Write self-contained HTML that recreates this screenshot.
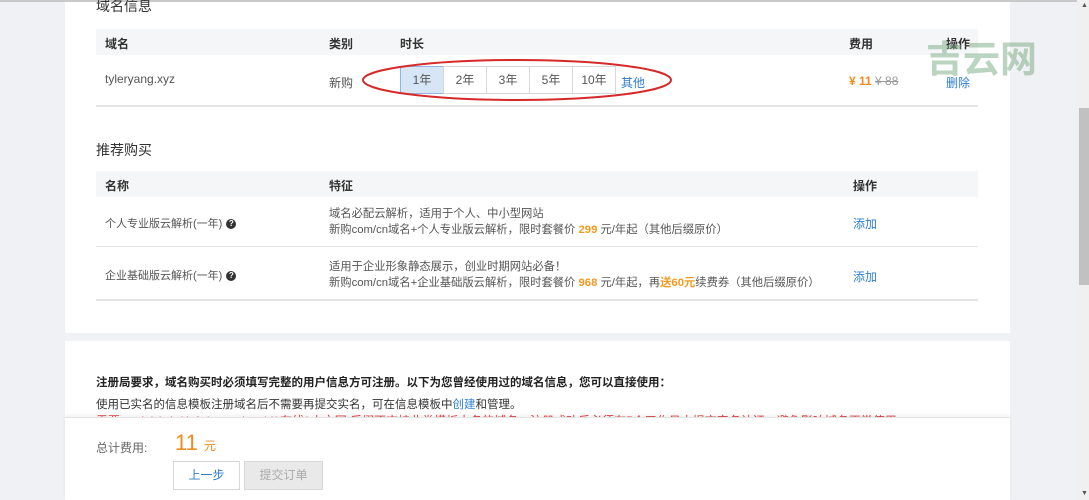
<!DOCTYPE html>
<html><head><meta charset="utf-8"><style>
*{margin:0;padding:0;box-sizing:border-box}
body{width:1089px;height:500px;overflow:hidden;background:#f0f1f4;font-family:"Liberation Sans","Noto Sans CJK SC",sans-serif;font-size:12px;color:#333;position:relative}
.abs{position:absolute}
.panel{position:absolute;left:65px;width:945px;background:#fff}
.th{position:absolute;left:96px;width:882px;height:26px;background:#f5f6f7;font-weight:bold;color:#333}
.line{position:absolute;left:96px;width:882px;height:2px;background:#e3e4e6}
.t{position:absolute;white-space:nowrap}
.blue{color:#2d7ed1}
.org{color:#f39a1e;font-weight:bold}
.yr{position:absolute;top:66px;height:28px;border:1px solid #d8d8d8;background:#fff;text-align:center;line-height:26px;color:#555}
.q{display:inline-block;width:10px;height:10px;border-radius:50%;background:#333;color:#fff;font-size:8px;line-height:10px;text-align:center;vertical-align:middle;margin-left:4px;font-weight:bold}
</style></head><body>
<div class="abs" style="left:0;top:0;width:1089px;height:2px;background:#c9c9c9"></div>
<div class="panel" style="top:2px;height:331px"></div>
<div class="panel" style="top:341px;height:80px"></div>
<div class="t" style="left:96px;top:-4px;font-size:14px;color:#333">域名信息</div>
<div class="th" style="top:29px"></div>
<div class="t" style="left:105px;top:35px;font-weight:bold">域名</div>
<div class="t" style="left:329px;top:35px;font-weight:bold">类别</div>
<div class="t" style="left:400px;top:35px;font-weight:bold">时长</div>
<div class="t" style="left:849px;top:35px;font-weight:bold">费用</div>
<div class="t" style="left:946px;top:35px;font-weight:bold">操作</div>
<div class="t" style="left:105px;top:72px;color:#555">tyleryang.xyz</div>
<div class="t" style="left:329px;top:74px;color:#555">新购</div>
<div class="yr" style="left:400px;width:44px;background:#d7e6f7;border-color:#8fb5e0">1年</div>
<div class="yr" style="left:443px;width:44px">2年</div>
<div class="yr" style="left:486px;width:44px">3年</div>
<div class="yr" style="left:529px;width:44px">5年</div>
<div class="yr" style="left:572px;width:44px">10年</div>
<div class="t blue" style="left:621px;top:74px">其他</div>
<svg class="abs" style="left:360px;top:56px" width="320" height="48"><ellipse cx="157" cy="24" rx="154" ry="20" fill="none" stroke="#d62a2a" stroke-width="2"/></svg>
<div class="t" style="left:849px;top:74px"><span class="org" style="color:#f08a1e">¥ 11</span> <span style="color:#999;text-decoration:line-through">¥ 88</span></div>
<div class="t" style="left:926px;top:29px;font-size:37px;font-weight:bold;color:rgba(120,170,130,.5);letter-spacing:0px">吉云网</div>
<div class="t blue" style="left:946px;top:74px">删除</div>
<div class="line" style="top:105px"></div>
<div class="t" style="left:96px;top:140px;font-size:14px">推荐购买</div>
<div class="th" style="top:171px"></div>
<div class="t" style="left:105px;top:177px;font-weight:bold">名称</div>
<div class="t" style="left:329px;top:177px;font-weight:bold">特征</div>
<div class="t" style="left:853px;top:177px;font-weight:bold">操作</div>
<div class="t" style="left:105px;top:215px;font-size:11px;color:#555">个人专业版云解析(一年)<span class="q">?</span></div>
<div class="t" style="left:329px;top:206px;color:#555;line-height:16px;font-size:11.3px">域名必配云解析，适用于个人、中小型网站<br>新购com/cn域名+个人专业版云解析，限时套餐价 <span class="org">299</span> 元/年起（其他后缀原价）</div>
<div class="t blue" style="left:853px;top:215px">添加</div>
<div class="line" style="top:246px;height:1px"></div>
<div class="t" style="left:105px;top:267px;font-size:11px;color:#555">企业基础版云解析(一年)<span class="q">?</span></div>
<div class="t" style="left:329px;top:259px;color:#555;line-height:16px;font-size:11.3px">适用于企业形象静态展示，创业时期网站必备！<br>新购com/cn域名+企业基础版云解析，限时套餐价 <span class="org">968</span> 元/年起，再<span class="org" style="color:#f39a1e">送60元</span>续费券（其他后缀原价）</div>
<div class="t blue" style="left:853px;top:268px">添加</div>
<div class="line" style="top:299px"></div>
<div class="t" style="left:96px;top:374px;font-weight:bold;color:#222;font-size:11.5px">注册局要求，域名购买时必须填写完整的用户信息方可注册。以下为您曾经使用过的域名信息，您可以直接使用：</div>
<div class="t" style="left:96px;top:396px;color:#333;font-size:11.5px">使用已实名的信息模板注册域名后不需要再提交实名，可在信息模板中<span class="blue">创建</span>和管理。</div>
<div class="t" style="left:96px;top:412px;color:#e04040">需要：.club/.vip/.info/.wang/.mobi/.在线/.中文网 后缀不支持此类模板中名的域名，注册成功后必须在5个工作日内提交实名认证，避免影响域名正常使用</div>
<div class="abs" style="left:65px;top:417px;width:945px;height:83px;background:#fff;border-top:1px solid #e4e4e4;box-shadow:0 -2px 4px rgba(0,0,0,.06)"></div>
<div class="t" style="left:96px;top:439px;color:#666">总计费用:</div>
<div class="t" style="left:175px;top:430px;font-size:22px;color:#f08a1e">11 <span style="font-size:12px">元</span></div>
<div class="abs" style="left:173px;top:461px;width:67px;height:29px;border:1px solid #d8d8d8;background:#fff;text-align:center;line-height:27px;color:#2d7ed1">上一步</div>
<div class="abs" style="left:244px;top:461px;width:79px;height:29px;border:1px solid #d8d8d8;background:#e9e9e9;text-align:center;line-height:27px;color:#aaa">提交订单</div>
<div class="abs" style="left:1077px;top:0;width:12px;height:500px;background:#f0f0f0"></div>
<div class="abs" style="left:1079px;top:108px;width:10px;height:177px;background:#c1c1c1"></div>
<div class="t" style="left:1081px;top:2px;font-size:7px;color:#555">▲</div>
<div class="t" style="left:1081px;top:490px;font-size:7px;color:#555">▼</div>
</body></html>
